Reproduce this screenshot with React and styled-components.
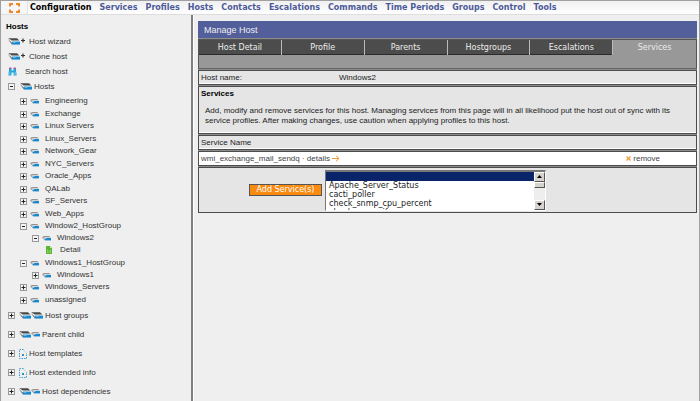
import React, { useRef } from "react";
import styled, { createGlobalStyle, css } from "styled-components";

const GlobalStyle = createGlobalStyle`
  *, *::before, *::after { box-sizing: border-box; }
  body {
    margin: 0;
    background: #efefef;
    color: #333;
    font: 8px/12px "Liberation Sans", Arial, sans-serif;
  }
  button, select { font: inherit; color: inherit; margin: 0; padding: 0; }
  ul { list-style: none; margin: 0; padding: 0; }
  a { color: inherit; text-decoration: none; }
`;

const Page = styled.div`
  min-height: 100vh;
  display: flex;
  flex-direction: column;
  border: 1px solid #a0a0a0;
`;

const TopBar = styled.header`
  display: flex;
  height: 14px;
  flex: none;
  background: linear-gradient(#f0f0f0, #fff);
  border-bottom: 1px solid #ddd;
`;

const LogoLink = styled.a`
  display: flex;
  align-items: center;
  justify-content: center;
  width: 27px;
  border-right: 1px solid #e2e2e2;
  background: #f6f6f6;
`;

const Nav = styled.nav`
  display: flex;
  align-items: center;
  gap: 8px;
  padding-left: 2px;
  font: bold 8px/12px "DejaVu Sans", Verdana, sans-serif;
  white-space: nowrap;
`;

const NavLink = styled.a`
  color: ${(p) => (p.$current ? "#000" : "#4d5a99")};
`;

const Body = styled.div`
  flex: 1;
  display: flex;
`;

const Sidebar = styled.aside`
  flex: none;
  width: 192px;
  padding: 6px 0 0 5px;
  border-right: 2px solid #808080;
`;

const SidebarTitle = styled.h2`
  margin: 0 0 1px;
  color: #000;
  font: bold 8px/12px "Liberation Sans", Arial, sans-serif;
`;

const Action = styled.a`
  display: flex;
  align-items: center;
  gap: ${(p) => p.$gap || 4}px;
  height: 15px;
  padding-left: 2px;
`;

const TreeRow = styled.div`
  display: flex;
  align-items: center;
  height: ${(p) => p.$height || 12}px;
  padding-left: ${(p) => p.$indent || 0}px;
  gap: ${(p) => p.$gap || 4}px;
  white-space: nowrap;
`;

const TreeItem = styled.li`
  &:nth-child(odd) { margin-bottom: ${(p) => (p.$spaced ? 1 : 0)}px; }
`;

const Tree = styled.ul`
  padding-top: 1px;
`;

const Toggle = styled.button`
  display: flex;
  flex: none;
  border: 0;
  background: none;
`;

const IconGroup = styled.span`
  display: flex;
  align-items: center;
  padding-left: ${(p) => p.$inset || 0}px;
`;

const Label = styled.a`
  padding-left: ${(p) => p.$inset || 0}px;
`;

const Main = styled.main`
  flex: 1;
  min-width: 0;
  border-left: 1px solid #fff;
  padding: 6px 2px 0 4px;
`;

const Panel = styled.section`
  display: flex;
  flex-direction: column;
  gap: 1px;
  background: #8c8c8c;
`;

const PanelTitle = styled.h1`
  margin: 0;
  padding: 0 6px;
  height: 17px;
  background: #535f9b;
  color: #eee;
  font: 9px/18px "Liberation Sans", Arial, sans-serif;
`;

const TabStrip = styled.div`
  background: #989898;
  border: 1px solid #555;
  border-bottom-color: #666;
  padding-bottom: 13px;
`;

const Tabs = styled.div`
  display: grid;
  grid-template-columns: repeat(6, 1fr);
`;

const Tab = styled.button`
  height: 15px;
  border: 0;
  border-right: 1px solid #bbb;
  color: #eee;
  background: #4c4c4c;
  box-shadow: inset 0 -1px #2b2b2b;
  font: 8px/14px "DejaVu Sans", Verdana, sans-serif;
  ${(p) =>
    p.$active &&
    css`
      border-right: 0;
      background: none;
      box-shadow: none;
    `}
`;

const Row = styled.div`
  display: flex;
  align-items: center;
  height: 15px;
  padding: 0 2px;
  border: 1px solid #4c4c4c;
  background: ${(p) => (p.$plain ? "#fff" : "#e5e5e5")};
  box-shadow: inset 0 -1px #fff;
  color: ${(p) => (p.$plain ? "#444" : "#222")};
`;

const FieldName = styled.span`
  width: 28%;
`;

const Notes = styled.div`
  padding: 2px 2px 7px;
  border: 1px solid #4c4c4c;
  background: #e5e5e5;
  box-shadow: inset 0 -1px #fff;
  color: #222;
  line-height: 10px;
`;

const NotesTitle = styled.h2`
  margin: 0 0 7px;
  color: #000;
  font: bold 8px/10px "Liberation Sans", Arial, sans-serif;
`;

const NotesText = styled.p`
  margin: 0;
  padding: 0 4px;
`;

const ServiceLink = styled.a`
  display: flex;
  align-items: center;
  gap: 2px;
`;

const RemoveLink = styled(ServiceLink)`
  margin-left: auto;
  padding-right: 34px;
`;

const AddForm = styled.form`
  display: flex;
  align-items: center;
  gap: 3px;
  height: 46px;
  padding: 0 50px;
  border: 1px solid #4c4c4c;
  background: #e5e5e5;
`;

const AddButton = styled.button`
  width: 73px;
  height: 12px;
  border: 1px solid #555;
  background: #fa8a10;
  color: #fff;
  font: 8px/10px "DejaVu Sans", Verdana, sans-serif;
`;

const ListBox = styled.div`
  display: flex;
  width: 221px;
  height: 41px;
  border: 1px solid #fff;
  border-top: 2px solid #777;
  border-left: 1px solid #777;
  background: #fff;
`;

const ServiceSelect = styled.select`
  flex: 1;
  min-width: 0;
  height: 38px;
  border: 0;
  border-radius: 0;
  outline: 0;
  background: #fff;
  color: #222;
  overflow-y: scroll;
  scrollbar-width: none;
  font: 8px/9px "DejaVu Sans", Verdana, sans-serif;
  option {
    min-height: 9px;
    height: 9px;
    padding: 0 3px;
    line-height: 9px;
  }
  option:checked {
    background: #0a246a linear-gradient(#0a246a, #0a246a);
  }
`;

const ScrollTrack = styled.div`
  display: flex;
  flex-direction: column;
  width: 11px;
  background: #eee;
`;

const raised = css`
  border: 1px solid #555;
  border-top-color: #fff;
  border-left-color: #fff;
  background: #d6d3ce;
`;

const ScrollButton = styled.button`
  ${raised}
  display: flex;
  align-items: center;
  justify-content: center;
  height: 10px;
`;

const ScrollThumb = styled.div`
  ${raised}
  height: 6px;
  margin-bottom: auto;
`;

function Logo() {
  return (
    <svg width="13" height="12" viewBox="0 0 13 12" fill="none" stroke="#f08a28" strokeWidth="2">
      <path d="M2 4.5V2H5M8 2H11V4.5M11 7.5V10H8M5 10H2V7.5" />
    </svg>
  );
}

function ToggleIcon({ open }) {
  return (
    <svg width="7" height="7" viewBox="0 0 7 7" fill="none">
      <rect x=".5" y=".5" width="6" height="6" fill="#f4f4f4" stroke="#999" />
      <path d={open ? "M2 3.5H5" : "M1.5 3.5H5.5M3.5 1.5V5.5"} stroke="#222" />
    </svg>
  );
}

function HostIcon({ plus }) {
  return (
    <svg width={plus ? 17 : 12} height="7" viewBox={plus ? "0 0 17 7" : "0 0 12 7"}>
      <path d="M0 1L4 4.5V6.8L1.2 3z" fill="#777" />
      <path d="M.3 .3H9L11.3 2.6H3.2z" fill="#484848" />
      <path d="M2 1.2L4 3.2H11.6V4H3.6L1.4 2z" fill="#f4f4f4" />
      <path d="M4 3.6H12V6.6H4z" fill="#1688cf" />
      <path d="M4.6 4.4H7.5" stroke="#8fd0f2" strokeWidth=".7" />
      {plus && <path d="M13 2.5H17M15 .5V4.5" stroke="#333" strokeWidth="1.2" />}
    </svg>
  );
}

function SmallHostIcon() {
  return (
    <svg width="9" height="5" viewBox="0 0 9 5">
      <path d="M0 1.2L1 .4 3 3V4.4z" fill="#999" />
      <path d="M1 .3H7.4L8.8 1.4H2z" fill="#777" />
      <path d="M1.2 1L2.8 2.2H8.8V1.4H2z" fill="#eee" />
      <path d="M3 2H9V4.4H3z" fill="#1688cf" />
      <path d="M3 2.4H4.4" stroke="#b5e0f5" strokeWidth=".8" />
    </svg>
  );
}

function BinocularsIcon() {
  return (
    <svg width="9" height="9" viewBox="0 0 9 9">
      <path d="M1 1H3.5V3.5H5.5V1H8V3.5L8.7 8.5H5.6V5.6H3.4V8.5H.3L1 3.5z" fill="#25a5d8" />
      <path d="M1.3 .5H3.3V2H1.3zM5.7 .5H7.7V2H5.7z" fill="#b44a9c" />
      <path d="M1.2 5V8M7.2 5V8" stroke="#6fd0ee" />
    </svg>
  );
}

function TemplateIcon() {
  return (
    <svg width="8" height="10" viewBox="0 0 8 10" fill="none">
      <path d="M4.5 .5H.5V9.5H7.5V4" stroke="#3f9fd0" strokeDasharray="1.5 1" />
      <path d="M4.5 1L7 3.5" stroke="#9ccfe8" strokeWidth=".7" />
      <path d="M3 5H5V7H3z" fill="#2e91c8" />
    </svg>
  );
}

function DetailIcon() {
  return (
    <svg width="6" height="8" viewBox="0 0 6 8">
      <path d="M0 0H4L6 2V8H0z" fill="#5cb531" />
      <path d="M4 0V2H6" fill="#cfe9c0" />
      <path d="M1.5 3.5V7M3 4.5V7M4.5 3.5V7" stroke="#bfe6a6" strokeWidth=".5" />
    </svg>
  );
}

const NAV = ["Configuration", "Services", "Profiles", "Hosts", "Contacts", "Escalations", "Commands", "Time Periods", "Groups", "Control", "Tools"];

const GROUPS = [
  { name: "Engineering" },
  { name: "Exchange" },
  { name: "Linux Servers" },
  { name: "Linux_Servers" },
  { name: "Network_Gear" },
  { name: "NYC_Servers" },
  { name: "Oracle_Apps" },
  { name: "QALab" },
  { name: "SF_Servers" },
  { name: "Web_Apps" },
  { name: "Window2_HostGroup", children: [{ name: "Windows2", detail: true }] },
  { name: "Windows1_HostGroup", children: [{ name: "Windows1" }] },
  { name: "Windows_Servers" },
  { name: "unassigned" },
];

const SECTIONS = [
  { name: "Host groups", icon: <><HostIcon /><HostIcon /></> },
  { name: "Parent child", icon: <><HostIcon /><SmallHostIcon /></> },
  { name: "Host templates", icon: <TemplateIcon /> },
  { name: "Host extended info", icon: <TemplateIcon /> },
  { name: "Host dependencies", icon: <><HostIcon /><SmallHostIcon /></> },
];

const TABS = ["Host Detail", "Profile", "Parents", "Hostgroups", "Escalations", "Services"];

const SERVICES = ["Apache_Server_Status", "cacti_poller", "check_snmp_cpu_percent", "check_snmp_if", "check_snmp_mem"];

function Expander({ name, open }) {
  return (
    <Toggle type="button" aria-label={name} aria-expanded={!!open}>
      <ToggleIcon open={open} />
    </Toggle>
  );
}

function HostNode({ node }) {
  return (
    <TreeItem>
      <TreeRow $indent={26} $gap={3}>
        <Expander name={node.name} open={node.detail} />
        <SmallHostIcon />
        <Label href="#" $inset={3}>{node.name}</Label>
      </TreeRow>
      {node.detail && (
        <TreeRow $indent={40} $gap={5}>
          <DetailIcon />
          <Label href="#" $inset={3}>Detail</Label>
        </TreeRow>
      )}
    </TreeItem>
  );
}

function GroupNode({ group }) {
  return (
    <TreeItem $spaced>
      <TreeRow $indent={14} $gap={3}>
        <Expander name={group.name} open={group.children} />
        <SmallHostIcon />
        <Label href="#" $inset={3}>{group.name}</Label>
      </TreeRow>
      {group.children && (
        <ul>
          {group.children.map((node) => <HostNode key={node.name} node={node} />)}
        </ul>
      )}
    </TreeItem>
  );
}

export default function App() {
  const list = useRef(null);
  const scroll = (amount) => list.current && list.current.scrollBy(0, amount);

  return (
    <Page>
      <GlobalStyle />
      <TopBar>
        <LogoLink href="#" aria-label="Home"><Logo /></LogoLink>
        <Nav>
          {NAV.map((item, i) => <NavLink key={item} href="#" $current={i === 0}>{item}</NavLink>)}
        </Nav>
      </TopBar>
      <Body>
        <Sidebar>
          <SidebarTitle>Hosts</SidebarTitle>
          <Action href="#"><HostIcon plus />Host wizard</Action>
          <Action href="#"><HostIcon plus />Clone host</Action>
          <Action href="#" $gap={8}><BinocularsIcon />Search host</Action>
          <TreeRow $height={15} $indent={2} $gap={2}>
            <Expander name="Hosts" open />
            <IconGroup $inset={3}><HostIcon /></IconGroup>
            <Label href="#">Hosts</Label>
          </TreeRow>
          <Tree>
            {GROUPS.map((group) => <GroupNode key={group.name} group={group} />)}
          </Tree>
          {SECTIONS.map((s) => (
            <TreeRow key={s.name} $height={19} $indent={2} $gap={2}>
              <Expander name={s.name} />
              <IconGroup $inset={2}>{s.icon}</IconGroup>
              <Label href="#">{s.name}</Label>
            </TreeRow>
          ))}
        </Sidebar>
        <Main>
          <Panel>
            <PanelTitle>Manage Host</PanelTitle>
            <TabStrip>
              <Tabs role="tablist">
                {TABS.map((tab) => (
                  <Tab key={tab} type="button" role="tab" aria-selected={tab === "Services"} $active={tab === "Services"}>
                    {tab}
                  </Tab>
                ))}
              </Tabs>
            </TabStrip>
            <Row>
              <FieldName>Host name:</FieldName>
              <span>Windows2</span>
            </Row>
            <Notes>
              <NotesTitle>Services</NotesTitle>
              <NotesText>
                Add, modify and remove services for this host. Managing services from this page will in all likelihood put the host out of sync with its service profiles. After making changes, use caution when applying profiles to this host.
              </NotesText>
            </Notes>
            <Row>Service Name</Row>
            <Row $plain>
              <ServiceLink href="#">
                wmi_exchange_mail_sendq · details
                <svg width="8" height="7" viewBox="0 0 8 7" fill="none" stroke="#f39a3c">
                  <path d="M0 3.5H7M4 .8L7 3.5 4 6.2" />
                </svg>
              </ServiceLink>
              <RemoveLink href="#">
                <svg width="5" height="5" viewBox="0 0 5 5" stroke="#f39a3c" strokeWidth="1.3">
                  <path d="M.5 .5L4.5 4.5M4.5 .5L.5 4.5" />
                </svg>
                remove
              </RemoveLink>
            </Row>
            <AddForm onSubmit={(e) => e.preventDefault()}>
              <AddButton type="submit">Add Service(s)</AddButton>
              <ListBox>
                <ServiceSelect ref={list} multiple size={4} defaultValue={[""]} aria-label="Services to add">
                  <option value="" aria-label="None" />
                  {SERVICES.map((name) => <option key={name}>{name}</option>)}
                </ServiceSelect>
                <ScrollTrack>
                  <ScrollButton type="button" aria-label="Scroll up" onClick={() => scroll(-9)}>
                    <svg width="5" height="3" viewBox="0 0 5 3"><path d="M0 3L2.5 0 5 3z" /></svg>
                  </ScrollButton>
                  <ScrollThumb />
                  <ScrollButton type="button" aria-label="Scroll down" onClick={() => scroll(9)}>
                    <svg width="5" height="3" viewBox="0 0 5 3"><path d="M0 0L2.5 3 5 0z" /></svg>
                  </ScrollButton>
                </ScrollTrack>
              </ListBox>
            </AddForm>
          </Panel>
        </Main>
      </Body>
    </Page>
  );
}
